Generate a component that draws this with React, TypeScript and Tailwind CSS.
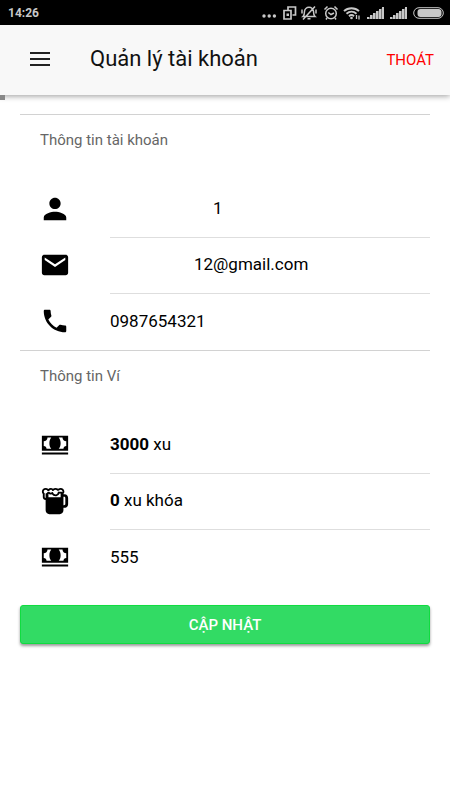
import type { ReactNode } from "react";
import { IoMdBeer, IoMdCall, IoMdCash, IoMdMail, IoMdPerson } from "react-icons/io";

const StatusBar = () => (
  <div className="flex h-[25px] items-center justify-between bg-black pl-2 pr-1.5 text-[#c8c8c8]">
    <span className="text-[12px] leading-4 font-bold">14:26</span>
    <div className="flex items-center">
      <svg className="mr-1.5 h-4 w-4" viewBox="0 0 16 16" fill="currentColor">
        <circle cx="3" cy="11" r="1.7" />
        <circle cx="8.2" cy="11" r="1.7" />
        <circle cx="13.4" cy="11" r="1.7" />
      </svg>
      <svg className="mr-1 h-4 w-3.5" viewBox="0 0 14 16" fill="none" stroke="currentColor" strokeWidth="1.7">
        <path d="M5 5V2h7.500v8h-3M1 5.500h7v8.500H1z" />
        <path d="M3.500 8.500h2.500v2.500H3.500z" fill="currentColor" stroke="none" />
      </svg>
      <svg className="mr-1.5 h-4 w-4" viewBox="0 0 16 16" fill="none" stroke="currentColor" strokeWidth="1.5">
        <path d="M2 11.500h12c-1.500-1.300-1.500-3-1.500-5A4.500 4.500 0 0 0 8 2.300a4.500 4.500 0 0 0-4.500 4.200c0 2 0 3.700-1.500 5zM6.500 13.700h3M1 4.500v4M15 4.500v4M14 1.500L2 14.500" />
      </svg>
      <svg className="mr-1 h-4 w-4" viewBox="0 0 16 16" fill="none" stroke="currentColor" strokeWidth="1.5">
        <circle cx="8" cy="8.500" r="5.300" />
        <path d="M1.500 4.500l3-3M14.500 4.500l-3-3M5.300 7.500L8 9.500l3-1.500M4 13l-1 1.500M12 13l1 1.500" />
      </svg>
      <svg className="mr-1.5 h-4 w-[18px]" viewBox="0 0 18 16" fill="none" stroke="currentColor" strokeWidth="1.900">
        <path d="M1 6.200c4-4 11-4 15 0M3.500 8.700c3-2.700 7-2.700 10 0M6 11.200c1.500-1.400 3.500-1.400 5 0" />
        <circle cx="8.500" cy="13" r="1.300" fill="currentColor" stroke="none" />
        <path d="M13.500 10v4M16 10.500v4" strokeWidth="1.300" />
      </svg>
      <Signal />
      <Signal />
      <svg className="h-3 w-[31px]" viewBox="0 0 31 12">
        <rect x="0.700" y="0.700" width="29.600" height="10.600" rx="5.300" fill="none" stroke="currentColor" />
        <rect x="4.500" y="2" width="24" height="8" rx="3" fill="currentColor" />
      </svg>
    </div>
  </div>
);

const Signal = () => (
  <svg className="mr-1.5 h-3 w-[17px]" viewBox="0 0 17 12" fill="currentColor">
    <path d="M0 10h2v2H0zM3 8h2v4H3zM6 6h2v6H6zM9 4h2v8H9zM12 2h2v10h-2zM15 0h2v12h-2z" />
    <path d="M0 12L17 0v12z" opacity="0.6" />
  </svg>
);

const Section = ({ title, children }: { title: string; children: ReactNode }) => (
  <section className="border-t border-[#d2d2d2]">
    <h2 className="mb-[17px] flex h-[50px] items-center pl-5 text-[15px] leading-5 text-[#666]">{title}</h2>
    {children}
  </section>
);

const Row = ({ icon, last = false, children }: { icon: ReactNode; last?: boolean; children: ReactNode }) => (
  <div className="flex pl-5">
    <div className="flex w-[70px] shrink-0 items-center pb-0.5 text-[30px]">{icon}</div>
    <div
      className={`flex h-14 min-w-0 flex-1 items-center text-[17px] leading-5 ${
        last ? "pb-0.5" : "border-b border-[#dedede] pb-[3px]"
      }`}
    >
      {children}
    </div>
  </div>
);

export default function App() {
  return (
    <div className="min-h-screen bg-white font-[Roboto,sans-serif] text-black">
      <StatusBar />
      <header className="relative flex h-[70px] items-center justify-between bg-[#f8f8f8] px-4 pb-0.5 shadow-[0_1px_6px_rgba(0,0,0,0.4)]">
        <div className="flex items-center">
          <button type="button" aria-label="Menu" className="flex w-[74px] pl-3.5">
            <svg className="h-5 w-5" viewBox="0 0 20 20" fill="none" stroke="#222" strokeWidth="2">
              <path d="M0 4h20M0 10h20M0 16h20" />
            </svg>
          </button>
          <h1 className="text-[22px] leading-7 font-normal text-[#111]">Quản lý tài khoản</h1>
        </div>
        <button type="button" className="pt-0.5 text-[15px] leading-5 font-normal text-[#f00]">
          THOÁT
        </button>
        <span className="absolute top-full left-0 h-[5px] w-[5px] bg-[#888]" />
      </header>
      <main className="px-5 pt-[19px]">
        <Section title="Thông tin tài khoản">
          <Row icon={<IoMdPerson />}>
            <span className="pl-[103px]">1</span>
          </Row>
          <Row icon={<IoMdMail />}>
            <span className="pl-[84px]">12@gmail.com</span>
          </Row>
          <Row icon={<IoMdCall />} last>
            <input type="tel" aria-label="Số điện thoại" defaultValue="0987654321" className="w-full outline-none" />
          </Row>
        </Section>
        <Section title="Thông tin Ví">
          <Row icon={<IoMdCash />}>
            <span>
              <b>3000</b> xu
            </span>
          </Row>
          <Row icon={<IoMdBeer />}>
            <span>
              <b>0</b> xu khóa
            </span>
          </Row>
          <Row icon={<IoMdCash />} last>
            <input type="text" aria-label="Số xu" defaultValue="555" className="w-full outline-none" />
          </Row>
        </Section>
        <button
          type="button"
          className="mt-[19px] h-[39px] w-full rounded-[3px] border border-[#10dc40] bg-[#32db64] text-[15px] leading-5 font-medium text-white shadow-[0_2px_3px_rgba(0,0,0,0.4)]"
        >
          CẬP NHẬT
        </button>
      </main>
    </div>
  );
}
